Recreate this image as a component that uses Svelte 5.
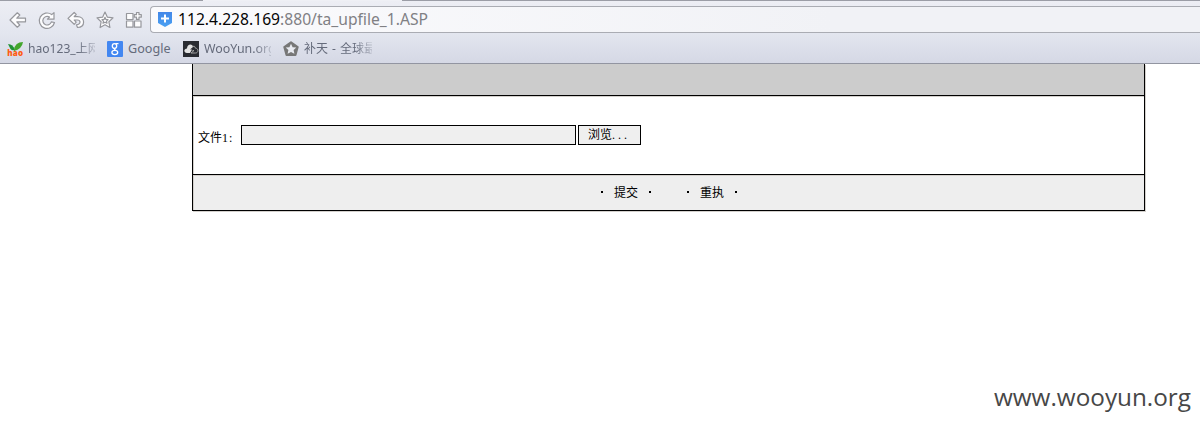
<script>
  const host = '112.4.228.169';
  const path = ':880/ta_upfile_1.ASP';
</script>

<div class="page">
  <header>
    <div class="tabs"><i class="left"></i><i class="active"></i><i class="right"></i></div>
    <div class="toolbar">
      <nav>
        <svg width="20" height="20" viewBox="0 0 20 20"><path class="tool" d="M2 10 9.3 2.8 11.8 5 8.8 8.2H17.5V11.8H8.8L11.8 15 9.3 17.2Z" /></svg>
        <svg width="20" height="20" viewBox="0 0 20 20"><path class="tool" d="M14.7 4.6 17 2.6V9.2H10.5L12.5 7.1A4.3 4.3 0 1 0 14.3 11.8L17.5 12.5A7.7 7.7 0 1 1 14.7 4.6Z" /></svg>
        <svg width="20" height="20" viewBox="0 0 20 20"><path class="tool" d="M2 8.4 8.2 2.5 10.2 4.5 8.2 6.6H11.5C15.2 6.6 17.6 9 17.6 12 17.6 15.4 15 17.4 11.5 17.5L10.4 14.8C12.6 14.6 14 13.5 14 12 14 10.6 13 10 11.3 10H8.2L10.2 12.2 8.2 14.3Z" /></svg>
        <svg width="20" height="20" viewBox="0 0 20 20"><path class="tool" d="M10 2 12.4 7.2 18 7.9 13.9 11.8 14.9 17.5 10 14.8 5.1 17.5 6.1 11.8 2 7.9 7.6 7.2Z" /><path class="tool" d="M10 7.3 10.9 9.4 13 9.7 11.5 11.1 12 13.2 10 12.2 8 13.2 8.5 11.1 7 9.7 9.1 9.4Z" /></svg>
        <svg width="20" height="20" viewBox="0 0 20 20"><path class="tool" d="M2.5 3.5H9V9.5H2.5ZM2.5 11H9V17.2H2.5ZM10.5 11H17V17.2H10.5Z" /><path class="tool" d="M12.5 2.5H15V4.7H17.3V7.2H15V9.4H12.5V7.2H10.3V4.7H12.5Z" /></svg>
      </nav>
      <div class="address">
        <svg width="16" height="17" viewBox="0 0 16 17"><defs><linearGradient id="shield" x2="0" y2="1"><stop stop-color="#4387e8" /><stop offset="1" stop-color="#49a0f2" /></linearGradient></defs><path d="M1 1H15V12L8 16 1 12Z" fill="url(#shield)" /><path d="M8 3.5V11.5M4 7.5H12" stroke="#fff" stroke-width="2" /></svg>
        <span class="url"><b>{host}</b>{path}</span>
      </div>
    </div>
    <div class="bookmarks">
      <div class="bookmark hao">
        <svg width="17" height="17" viewBox="0 0 17 17"><path d="M1 3Q6 3 8 9Q5 10 3.5 8Z" fill="#219235" /><path d="M7 9Q8 1 16 1Q15 8 7 10Z" fill="#43a62c" /><text x=".2" y="15.3" textLength="16">hao</text></svg>
        <span>hao123_上网</span>
      </div>
      <div class="bookmark google">
        <svg width="16" height="16" viewBox="0 0 16 16"><rect width="16" height="16" rx="1" fill="#4387f1" /><g fill="none" stroke="#fff" stroke-width="1.3"><ellipse cx="7.5" cy="5" rx="2.2" ry="2.4" /><path d="M8.5 2.6H11.5M8.5 7.4Q6.3 8.4 8.6 9.3" /><ellipse cx="7.8" cy="11.5" rx="2.9" ry="2.1" /></g></svg>
        <span>Google</span>
      </div>
      <div class="bookmark wooyun">
        <svg width="16" height="16" viewBox="0 0 16 16"><rect width="16" height="16" fill="#292b31" /><path d="M7 12H4C0 11.5 1 7.5 4 7.5 4 2.5 10 2.5 10 6L7 8.5H9Z" fill="#e3e3e3" /><path d="M9.5 5.3Q12 4.5 12.5 7.2C16 7.5 15.5 12 12.5 12H8L11 9.5H9.5" fill="none" stroke="#a3a3a3" /></svg>
        <span>WooYun.org</span>
      </div>
      <div class="bookmark butian">
        <svg width="16" height="16" viewBox="0 0 16 16"><path d="M8 1.2 14.7 6 12.5 14H3.5L1.3 6Z" fill="#777" stroke="#777" stroke-width="2" stroke-linejoin="round" /><path d="M8 2.8 9.6 6.2 13.3 6.6 10.6 9.1 11.4 12.8 8 11 4.6 12.8 5.4 9.1 2.7 6.6 6.4 6.2Z" fill="#e8eaf0" /></svg>
        <span>补天 - 全球最</span>
      </div>
    </div>
  </header>

  <main>
    <div class="heading"></div>
    <div class="file-row">
      <label for="file">文件<em>1:</em></label>
      <input id="file" type="text" />
      <button class="browse">浏览<em>...</em></button>
    </div>
    <div class="actions">
      <button><i></i><span>提交</span><i></i></button>
      <button><i></i><span>重执</span><i></i></button>
    </div>
  </main>
  <footer>www.wooyun.org</footer>
</div>

<style>
  :global(body) { margin: 0; background: #fff; }
  * { box-sizing: border-box; }
  .page { height: 427px; display: flex; flex-direction: column; overflow: hidden; }
  header { height: 64px; flex: none; border-bottom: 1px solid #9295a1; background: linear-gradient(#edeef4, #e3e6ef 52%, #d5d8e5); }
  .tabs { height: 1px; display: flex; }
  .tabs i { background: #9b9da6; }
  .tabs .left { width: 203px; }
  .tabs .active { width: 199px; background: #eff0f5; }
  .tabs .right { flex: 1; }
  .toolbar { height: 32px; padding-top: 5px; display: flex; }
  nav { display: flex; gap: 9px; width: 150px; padding: 4px 0 0 8px; flex: none; }
  nav svg { flex: none; }
  .tool { fill: #fdfdfe; stroke: #96979c; stroke-width: 1.2; stroke-linejoin: round; fill-rule: evenodd; }
  .address { flex: 1; height: 27px; border: 1px solid #aaacb3; border-right: 0; border-radius: 4px 0 0 4px; background: linear-gradient(90deg, #fbfbfd, #f1f2f6 65%, #f1f2f6); display: flex; padding: 4px 0 0 6px; }
  .url { margin: -3px 0 0 5px; color: #808084; font: 15.65px/22px "Noto Sans", "Open Sans", sans-serif; white-space: nowrap; }
  .url b { font-weight: 400; color: #050505; }
  .bookmarks { display: flex; padding: 8px 0 0 7px; }
  .bookmark { display: flex; height: 18px; color: #656b7b; font: 12.6px/17px "Noto Sans", "Noto Sans CJK SC", sans-serif; white-space: nowrap; }
  .bookmark svg { flex: none; }
  .bookmark span { margin: -1px 0 0 5px; flex: 1; overflow: hidden; }
  .hao { width: 100px; }
  .hao span { margin: -1px 12px 0 4px; font-size: 12.1px; }
  .hao text { font: 800 8px "Open Sans", sans-serif; fill: #ff5b12; }
  .google { width: 76px; }
  .wooyun { width: 100px; }
  .wooyun span { flex: none; width: 67px; font-size: 12.4px; }
  .butian { width: 89px; }
  .butian span { font-size: 12px; word-spacing: 1px; }
  .hao span, .wooyun span, .butian span { mask-image: linear-gradient(90deg, #000 74%, rgba(0, 0, 0, .25)); }
  main { width: 953px; margin-left: 192px; border: 1px solid #000; border-top: 0; box-shadow: 1px 1px #d3d0cc; }
  main > div { box-shadow: inset 1px 1px #d3d0cc; }
  .heading { height: 32px; background: #ccc; border-bottom: 1px solid #000; }
  main .heading { box-shadow: none; }
  .file-row { height: 79px; padding: 29px 0 0 5px; border-bottom: 1px solid #000; display: flex; align-items: flex-start; }
  label, button { color: #000; font: 12px/18px "Noto Sans CJK SC", sans-serif; }
  label { width: 43px; margin-top: 3px; white-space: nowrap; }
  em { font: 12px/18px "Liberation Serif", serif; letter-spacing: 1px; }
  input { width: 335px; height: 20px; border: 1px solid #000; border-radius: 0; background: #efefef; padding: 0; }
  .browse { width: 63px; height: 20px; margin-left: 2px; padding: 0 0 2px 9px; line-height: 16px; border: 1px solid #000; background: #efefef; text-align: left; }
  .browse em { letter-spacing: 3px; line-height: 16px; }
  .actions { height: 35px; background: #eee; display: flex; padding: 8px 0 0 407px; gap: 34px; }
  .actions button { width: 52px; border: 0; background: none; padding: 0; display: flex; align-items: center; height: 18px; justify-content: space-between; }
  .actions i { width: 2px; height: 2px; background: #000; margin: 0 1px; }
  footer { margin: auto 9px 13px auto; color: #474747; font: 24.3px/34px "Open Sans", "Noto Sans", sans-serif; white-space: nowrap; }
</style>
